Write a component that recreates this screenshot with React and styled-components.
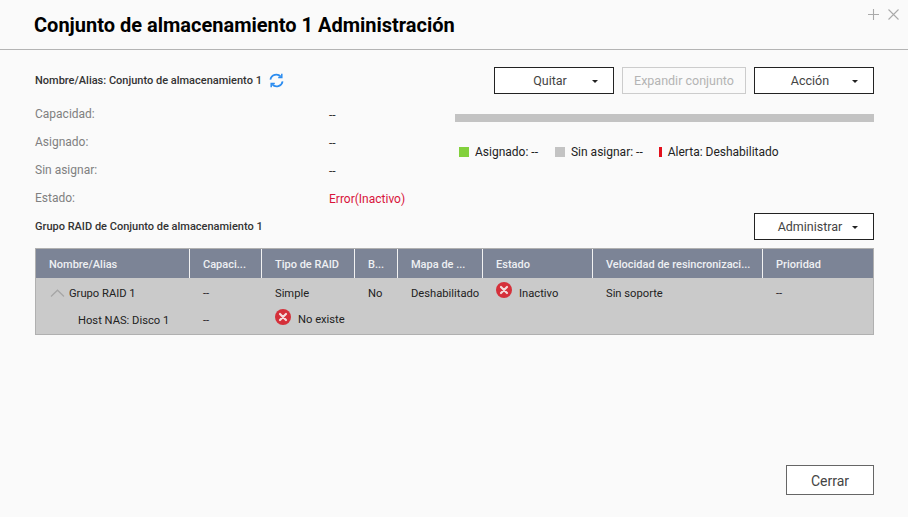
import React from "react";
import styled, { createGlobalStyle } from "styled-components";

const GlobalStyle = createGlobalStyle`
  html, body { margin: 0; padding: 0; background: #fafafa; }
  body { font-family: Roboto, "Liberation Sans", sans-serif; color: #222; }
  * { box-sizing: border-box; }
`;

const Page = styled.div`
  position: relative;
  width: 908px;
  height: 517px;
  display: flex;
  flex-direction: column;
  background: #fafafa;
  overflow: hidden;
`;

const Header = styled.header`
  height: 50px;
  padding: 12px 0 0 34px;
  border-bottom: 1px solid #b4b4b4;
`;

const Title = styled.h1`
  margin: 0;
  font-size: 20px;
  line-height: 26px;
  font-weight: 700;
  color: #000;
`;

const WindowControls = styled.div`
  position: absolute;
  top: 9px;
  right: 9px;
  display: flex;
  gap: 9px;
  svg { display: block; }
`;

const Body = styled.main`
  flex: 1;
  display: flex;
  flex-direction: column;
  padding: 17px 34px 22px 35px;
`;

const TopRow = styled.div`
  display: flex;
  justify-content: space-between;
  align-items: center;
  height: 27px;
`;

const NameLabel = styled.div`
  display: flex;
  align-items: center;
  gap: 7px;
  font-size: 11px;
  font-weight: 500;
  color: #333;
`;

const Toolbar = styled.div`
  display: flex;
  gap: 8px;
`;

const Button = styled.button`
  position: relative;
  width: ${(p) => p.$width || 120}px;
  height: 27px;
  padding: 0 ${(p) => (p.$menu ? 8 : 0)}px 0 0;
  background: #fff;
  border: 1px solid #222;
  font-family: inherit;
  font-size: 12.5px;
  color: #444;
  &:disabled {
    background: #fafafa;
    border-color: #ccc;
    color: #b4b4b4;
  }
  ${(p) => p.$menu && `
    &::after {
      content: "";
      position: absolute;
      right: 15px;
      top: 12px;
      border-left: 3px solid transparent;
      border-right: 3px solid transparent;
      border-top: 3px solid #222;
    }
  `}
`;

const Summary = styled.section`
  display: grid;
  grid-template-columns: 420px 1fr;
  margin-top: 6px;
`;

const InfoList = styled.div`
  display: flex;
  flex-direction: column;
`;

const InfoRow = styled.div`
  display: grid;
  grid-template-columns: 294px 1fr;
  align-items: center;
  height: 28px;
  font-size: 12px;
`;

const InfoLabel = styled.span`
  color: #808080;
`;

const InfoValue = styled.span`
  color: ${(p) => (p.$error ? "#d8143a" : "#333")};
  position: relative;
  top: 1px;
`;

const Usage = styled.div`
  display: flex;
  flex-direction: column;
`;

const Bar = styled.div`
  height: 8px;
  margin-top: 14px;
  background: #c3c3c3;
`;

const Legend = styled.div`
  display: flex;
  align-items: center;
  margin: 23px 0 0 4px;
  font-size: 12px;
  color: #222;
`;

const LegendItem = styled.span`
  display: flex;
  align-items: center;
  gap: 6px;
  margin-right: ${(p) => p.$gap || 0}px;
`;

const Swatch = styled.i`
  display: block;
  width: ${(p) => p.$width || 10}px;
  height: 10px;
  background: ${(p) => p.$color};
`;

const RaidRow = styled.div`
  display: flex;
  justify-content: space-between;
  align-items: center;
  height: 27px;
  margin-top: 1px;
  font-size: 11px;
  font-weight: 500;
  color: #333;
`;

const COLUMNS = "154px 72px 93px 43px 85px 110px 170px 1fr";

const Table = styled.div`
  margin-top: 8px;
  height: 87px;
  background: #cacaca;
  border: 1px solid #b0b0b0;
`;

const HeadRow = styled.div`
  display: grid;
  grid-template-columns: ${COLUMNS};
  height: 29px;
  background: #7c8496;
`;

const HeadCell = styled.div`
  display: flex;
  align-items: center;
  padding: 2px 0 0 13px;
  font-size: 11px;
  font-weight: 500;
  color: #eef0f3;
  white-space: nowrap;
  border-right: ${(p) => (p.$last ? "none" : "1px solid #f2f2f2")};
`;

const BodyRow = styled.div`
  display: grid;
  grid-template-columns: ${COLUMNS};
  height: 28px;
`;

const Cell = styled.div`
  display: flex;
  align-items: center;
  gap: ${(p) => p.$gap ?? 7}px;
  margin-top: ${(p) => p.$lift ?? 0}px;
  padding-left: ${(p) => p.$indent ?? 13}px;
  padding-top: ${(p) => p.$top ?? 2}px;
  font-size: 11.2px;
  color: #222;
  white-space: nowrap;
`;

const StatusIcon = styled.svg`
  flex: none;
  margin-top: -6px;
`;

const Footer = styled.footer`
  margin-top: auto;
  display: flex;
  justify-content: flex-end;
`;

const CloseButton = styled(Button)`
  width: 88px;
  height: 30px;
  padding: 1px 0 0;
  border-color: #666;
  font-size: 14px;
`;

const RefreshIcon = () => (
  <svg width="15" height="15" viewBox="0 0 15 15" fill="none" stroke="#2b8cf0" strokeWidth="1.7">
    <path d="M1.4 6.6a6 6 0 0 1 10.4-3" />
    <path d="M13.6 8.4a6 6 0 0 1-10.4 3" />
    <path d="M12.8 0.8v3.6H9.2" strokeWidth="1.5" />
    <path d="M2.2 14.2v-3.6h3.6" strokeWidth="1.5" />
  </svg>
);

const ErrorIcon = () => (
  <StatusIcon width="16" height="16" viewBox="0 0 16 16">
    <circle cx="8" cy="8" r="8" fill="#d5303a" />
    <path d="M5 5l6 6M11 5l-6 6" stroke="#f4dcdc" strokeWidth="2.2" strokeLinecap="round" />
  </StatusIcon>
);

const Chevron = () => (
  <svg width="15" height="8" viewBox="0 0 15 8" fill="none" stroke="#a6a6a6" strokeWidth="1.2">
    <path d="M1 7.5L7.5 1.2 14 7.5" />
  </svg>
);

const info = [
  ["Capacidad:", "--"],
  ["Asignado:", "--"],
  ["Sin asignar:", "--"],
  ["Estado:", "Error(Inactivo)"],
];

const headers = [
  "Nombre/Alias",
  "Capaci...",
  "Tipo de RAID",
  "B...",
  "Mapa de ...",
  "Estado",
  "Velocidad de resincronizaci...",
  "Prioridad",
];

export default function App() {
  return (
    <Page>
      <GlobalStyle />
      <Header>
        <Title>Conjunto de almacenamiento 1 Administración</Title>
      </Header>
      <WindowControls>
        <svg width="11" height="11" viewBox="0 0 11 11" stroke="#aaa" strokeWidth="1.1">
          <path d="M5.5 0v11M0 5.5h11" />
        </svg>
        <svg width="11" height="11" viewBox="0 0 11 11" stroke="#aaa" strokeWidth="1.1">
          <path d="M.5.5l10 10M10.5.5l-10 10" />
        </svg>
      </WindowControls>

      <Body>
        <TopRow>
          <NameLabel>
            Nombre/Alias: Conjunto de almacenamiento 1 <RefreshIcon />
          </NameLabel>
          <Toolbar>
            <Button $menu>Quitar</Button>
            <Button $width={124} disabled>Expandir conjunto</Button>
            <Button $menu>Acción</Button>
          </Toolbar>
        </TopRow>

        <Summary>
          <InfoList>
            {info.map(([label, value]) => (
              <InfoRow key={label}>
                <InfoLabel>{label}</InfoLabel>
                <InfoValue $error={value !== "--"}>{value}</InfoValue>
              </InfoRow>
            ))}
          </InfoList>
          <Usage>
            <Bar />
            <Legend>
              <LegendItem $gap={17}><Swatch $color="#82d03c" />Asignado: --</LegendItem>
              <LegendItem $gap={16}><Swatch $color="#c3c3c3" />Sin asignar: --</LegendItem>
              <LegendItem><Swatch $color="#e3101c" $width={3} />Alerta: Deshabilitado</LegendItem>
            </Legend>
          </Usage>
        </Summary>

        <RaidRow>
          Grupo RAID de Conjunto de almacenamiento 1
          <Button $menu>Administrar</Button>
        </RaidRow>

        <Table>
          <HeadRow>
            {headers.map((h, i) => (
              <HeadCell key={h} $last={i === headers.length - 1}>{h}</HeadCell>
            ))}
          </HeadRow>
          <BodyRow>
            <Cell $indent={14} $gap={4}><Chevron />Grupo RAID 1</Cell>
            <Cell>--</Cell>
            <Cell>Simple</Cell>
            <Cell>No</Cell>
            <Cell>Deshabilitado</Cell>
            <Cell><ErrorIcon />Inactivo</Cell>
            <Cell>Sin soporte</Cell>
            <Cell>--</Cell>
          </BodyRow>
          <BodyRow>
            <Cell $indent={42} $top={0}>Host NAS: Disco 1</Cell>
            <Cell $top={0}>--</Cell>
            <Cell $top={0} $lift={-1}><ErrorIcon />No existe</Cell>
          </BodyRow>
        </Table>

        <Footer>
          <CloseButton>Cerrar</CloseButton>
        </Footer>
      </Body>
    </Page>
  );
}
